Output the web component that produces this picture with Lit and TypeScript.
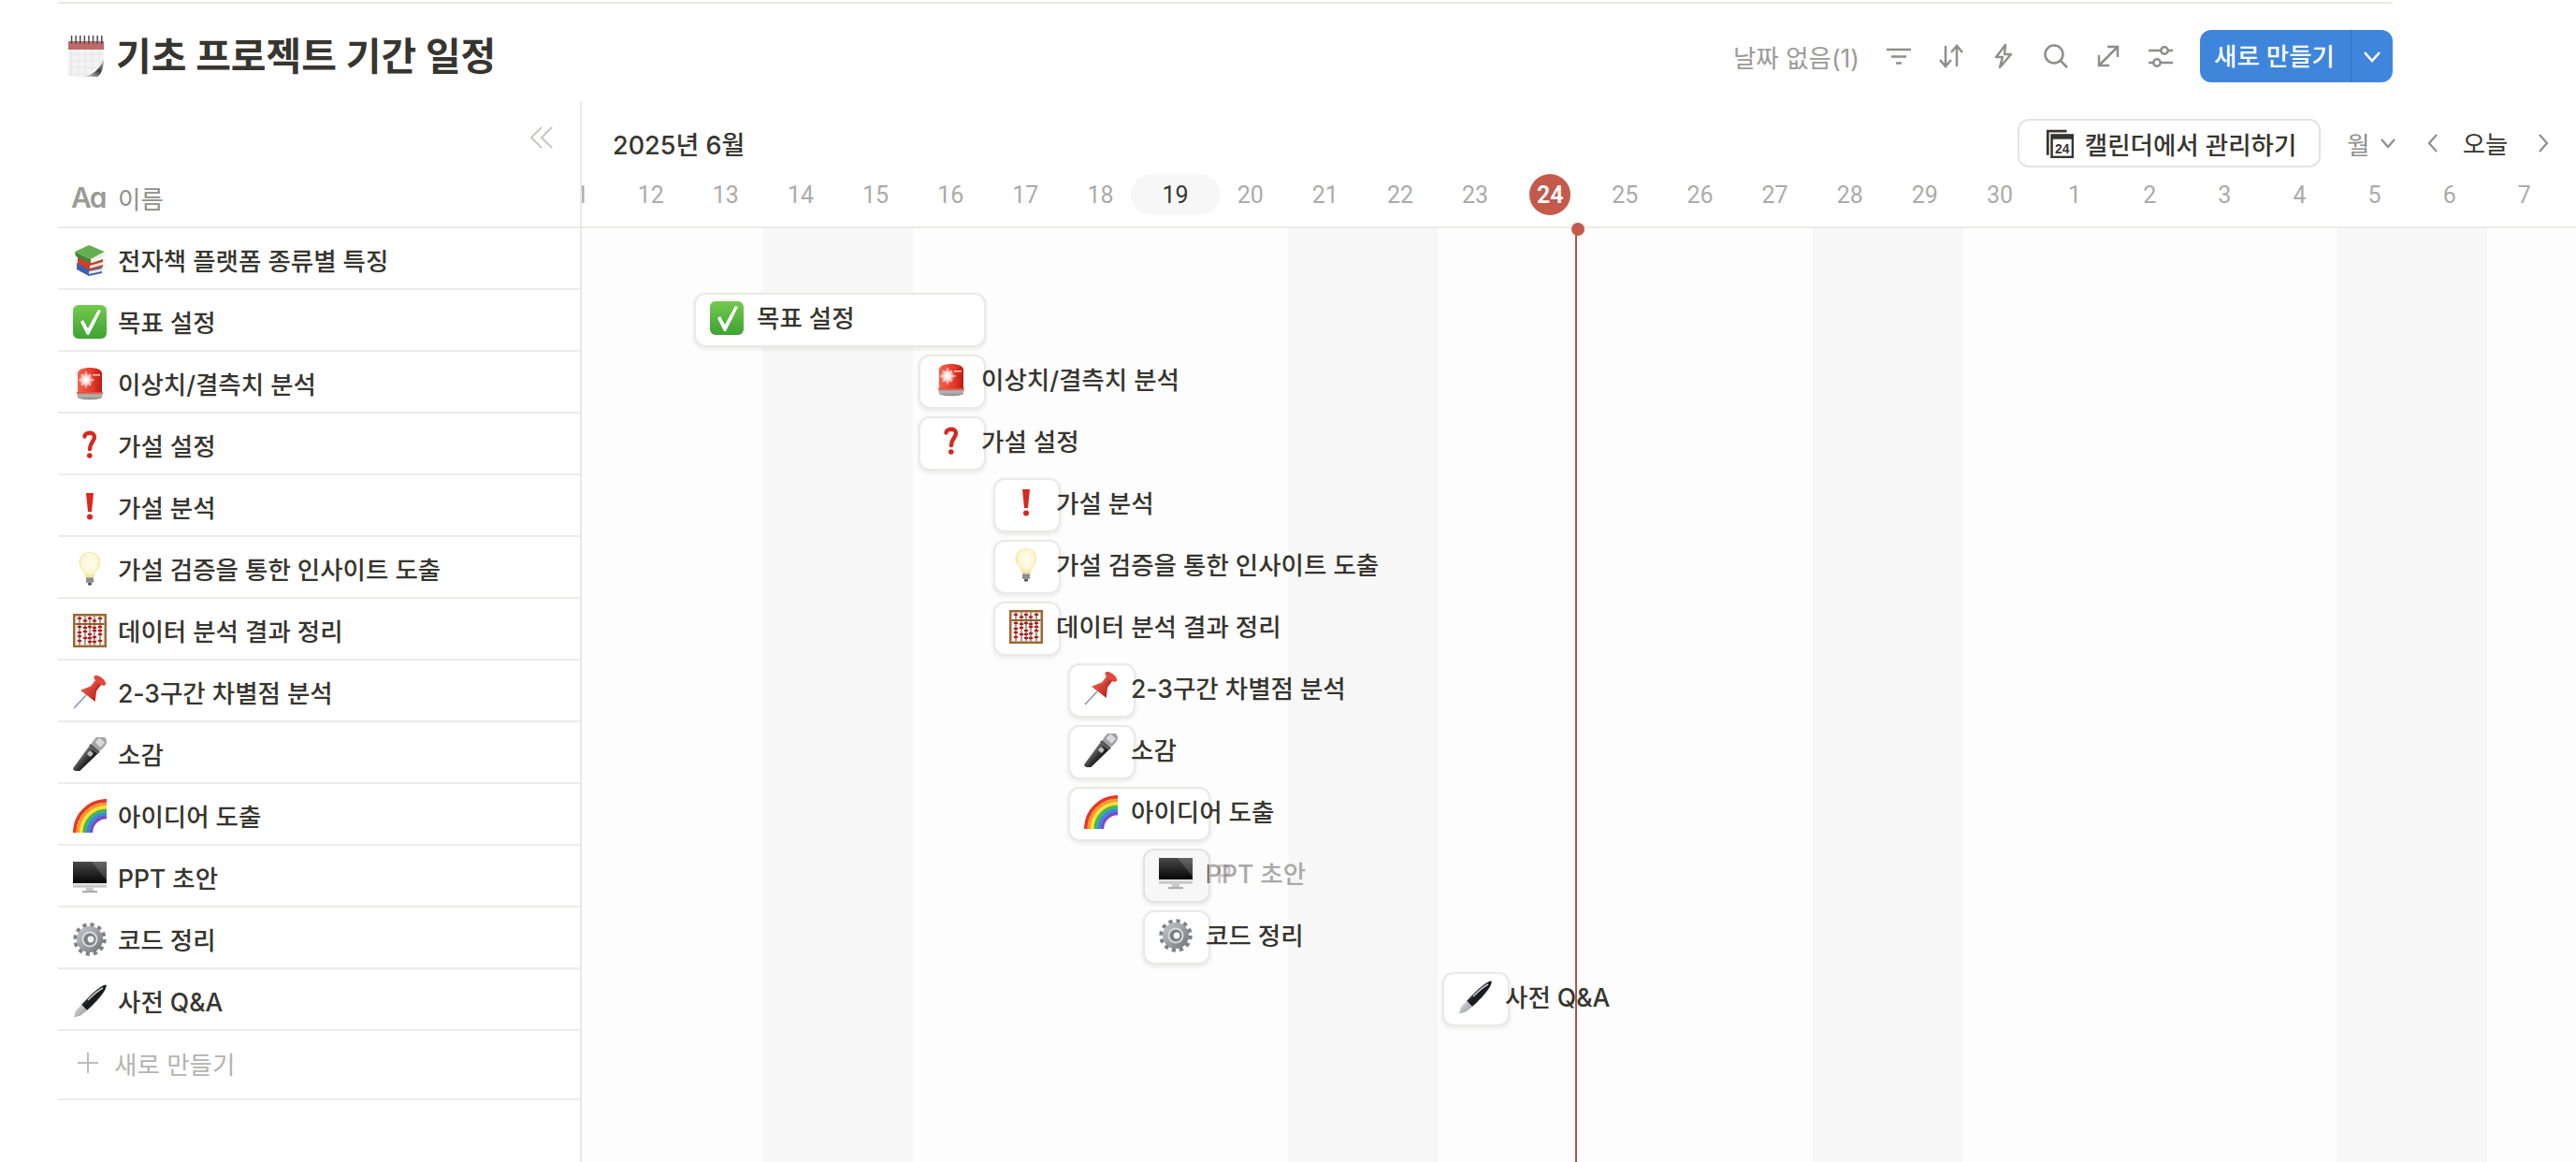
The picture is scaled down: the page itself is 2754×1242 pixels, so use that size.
import { LitElement, html, svg, css } from "lit";
import { customElement } from "lit/decorators.js";

const box = (body: unknown) => html`<svg class="emoji" viewBox="0 0 36 36">${body}</svg>`;

const seq = (n: number) => Array.from({ length: n }, (_, i) => i);

const emoji: Record<string, () => unknown> = {
  books: () => box(svg`
    <polygon points="4,21 18,28 31,25 31,32 17,35 4,28" fill="#3a5fb5"/>
    <polygon points="17,30 31,27 31,30 17,33" fill="#e8e8e2"/>
    <polygon points="5,14 20,21 32,17 32,25 18,29 5,22" fill="#c9402e"/>
    <polygon points="18,24 32,20 32,23 18,27" fill="#eee9e0"/>
    <polygon points="2,9 19,17 19,21 3,14" fill="#3d8a33"/>
    <polygon points="2,9 17,2 34,9 19,17" fill="#63ae50"/>
    <polygon points="19,17 34,9 34,13 19,21" fill="#eeeee6"/>`),
  check: () => box(svg`
    <defs><linearGradient id="gc" x1="0" y1="0" x2="0" y2="1"><stop offset="0" stop-color="#74c94f"/><stop offset="1" stop-color="#3ea233"/></linearGradient></defs>
    <rect x="0" y="0" width="36" height="36" rx="6" fill="url(#gc)"/>
    <path d="M8 18 L11 16 L16 25 L27 5 L30 6 L17 32 L15 32 Z" fill="#fff"/>`),
  siren: () => box(svg`
    <defs>
      <linearGradient id="gs" x1="0" y1="0" x2="1" y2="0"><stop offset="0" stop-color="#f8604c"/><stop offset=".6" stop-color="#e8392b"/><stop offset="1" stop-color="#b81e14"/></linearGradient>
      <linearGradient id="gs2" x1="0" y1="0" x2="0" y2="1"><stop offset="0" stop-color="#d24a3c"/><stop offset=".45" stop-color="#b9b6b2"/><stop offset="1" stop-color="#8c8a87"/></linearGradient>
      <radialGradient id="gs3" cx=".5" cy=".5" r=".5"><stop offset="0" stop-color="#fff"/><stop offset=".55" stop-color="#fff" stop-opacity=".7"/><stop offset="1" stop-color="#fff" stop-opacity="0"/></radialGradient>
    </defs>
    <path d="M5 28 V7 C5 -1 31 -1 31 7 V28 Z" fill="url(#gs)"/>
    <circle cx="14" cy="14" r="8" fill="url(#gs3)"/>
    <path d="M14 5 V23 M6 14 H23 M9 8 L19 20 M19 8 L9 20" stroke="#fff" stroke-width="1.1" opacity=".85"/>
    <rect x="21" y="8" width="8" height="1.6" fill="#fff" opacity=".7"/>
    <path d="M4 27 H32 L31 33 C28 36 8 36 5 33 Z" fill="url(#gs2)"/>`),
  question: () => box(svg`
    <path d="M12.5 8.5 C12.5 4 23 3 23 9 C23 14 18 15 18 22" fill="none" stroke="#d8281e" stroke-width="4.4" stroke-linecap="round"/>
    <circle cx="17.8" cy="29" r="2.8" fill="#d8281e"/>`),
  bang: () => box(svg`
    <polygon points="14,3 22,3 20,23 16,23" fill="#d8281e"/>
    <circle cx="18" cy="28.5" r="3" fill="#d8281e"/>`),
  bulb: () => box(svg`
    <defs><radialGradient id="gb" cx=".5" cy=".42" r=".6"><stop offset="0" stop-color="#fffef6"/><stop offset=".65" stop-color="#fdf6d0"/><stop offset="1" stop-color="#f3dc8c"/></radialGradient></defs>
    <path d="M18 0.5 C10 0.5 7 6 7 11.5 C7 17.5 13 20 14 27 H22 C23 20 29 17.5 29 11.5 C29 6 26 0.5 18 0.5Z" fill="url(#gb)" stroke="#ecdca0" stroke-width=".6"/>
    <rect x="14" y="27" width="8" height="6" rx="1" fill="#a9a8a3"/>
    <rect x="14" y="28.6" width="8" height="1" fill="#70706c"/>
    <rect x="14" y="30.8" width="8" height="1" fill="#70706c"/>
    <rect x="16" y="33" width="4" height="2.5" rx="1" fill="#4a4a48"/>`),
  abacus: () => box(svg`
    <rect width="36" height="36" fill="#9a6b35"/>
    <rect x="2.5" y="2.5" width="31" height="31" fill="#f8f6f2"/>
    ${[7, 13, 18, 23, 29].map(x => svg`<rect x="${x - 0.5}" y="2.5" width="1" height="31" fill="#5c4630"/>`)}
    <rect x="2.5" y="10" width="31" height="2" fill="#8a5f2e"/>
    ${[[7, 5], [13, 7.5], [18, 5], [23, 7.5], [29, 5], [7, 14], [7, 20], [7, 24], [7, 29], [13, 15], [13, 19], [13, 26], [18, 14], [18, 22], [18, 26], [18, 30], [23, 15], [23, 18], [23, 25], [23, 30], [29, 14], [29, 18], [29, 22], [29, 29]].map(
      ([x, y]) => svg`<ellipse cx="${x}" cy="${y}" rx="2.4" ry="1.3" fill="#b9191a"/>`)}`),
  pin: () => box(svg`
    <defs><linearGradient id="gp" x1="0" y1="0" x2="1" y2="0"><stop offset="0" stop-color="#e4564a"/><stop offset="1" stop-color="#b8261c"/></linearGradient></defs>
    <line x1="1" y1="35" x2="14" y2="21" stroke="#6f8fae" stroke-width="1.2"/>
    <g transform="rotate(38 22 14)">
      <polygon points="12,24 32,24 26,14 18,14" fill="url(#gp)"/>
      <rect x="18" y="4" width="8" height="11" fill="url(#gp)"/>
      <ellipse cx="22" cy="3" rx="7.5" ry="3.5" fill="#e2473a"/>
    </g>`),
  mic: () => box(svg`
    <defs><linearGradient id="gm" x1="0" y1="0" x2="1" y2="0"><stop offset="0" stop-color="#6f6f6f"/><stop offset=".5" stop-color="#3a3a3a"/><stop offset="1" stop-color="#141414"/></linearGradient></defs>
    <g transform="rotate(41 18 18)">
      <polygon points="12,12 24,12 21.5,42 14.5,42" fill="url(#gm)"/>
      <rect x="15.5" y="15" width="5" height="5" rx="1" fill="#bdbdbd"/>
      <rect x="11.5" y="-6" width="13" height="18" rx="6.5" fill="#a2a2a4"/>
      <rect x="14" y="-2" width="8" height="7" rx="1" fill="#d9d9da"/>
      <rect x="11.5" y="9" width="13" height="3" fill="#555"/>
    </g>`),
  rainbow: () => box(svg`${["#e8352b", "#f49a24", "#f9e13d", "#49b648", "#2f8de0", "#7b4bc4"].map((c, i) => {
    const r = 34.2 - i * 3.5;
    return svg`<path d="M${36 - r} 36 A${r} ${r} 0 0 1 36 ${36 - r}" fill="none" stroke="${c}" stroke-width="3.7"/>`;
  })}`),
  monitor: () => box(svg`
    <defs>
      <linearGradient id="gd" x1="0" y1="0" x2="0" y2="1"><stop offset="0" stop-color="#4a4a4a"/><stop offset="1" stop-color="#050505"/></linearGradient>
      <linearGradient id="gd2" x1="0" y1="0" x2="0" y2="1"><stop offset="0" stop-color="#f2f2f2"/><stop offset="1" stop-color="#b4b4b4"/></linearGradient>
    </defs>
    <rect x="0" y="1" width="36" height="23" fill="url(#gd)"/>
    <polygon points="20,1 36,1 36,21" fill="#fff" opacity=".16"/>
    <rect x="0" y="24" width="36" height="4.5" fill="url(#gd2)"/>
    <rect x="14" y="28.5" width="8" height="3.5" fill="#c9c9c9"/>
    <rect x="10" y="32" width="16" height="2.2" fill="#adadad"/>`),
  gear: () => box(svg`
    <defs><linearGradient id="gg" x1="0" y1="0" x2="1" y2="1"><stop offset="0" stop-color="#c9cbd0"/><stop offset="1" stop-color="#6f7278"/></linearGradient></defs>
    <circle cx="18" cy="18" r="15.5" fill="none" stroke="#7d8086" stroke-width="4.4" stroke-dasharray="4.06 4.06"/>
    <circle cx="18" cy="18" r="14" fill="url(#gg)"/>
    <circle cx="18" cy="18" r="8.5" fill="#d9dade"/>
    <circle cx="18" cy="18" r="6.5" fill="#7b7d83"/>
    <circle cx="19" cy="18" r="3.4" fill="#f5f5f5"/>`),
  pen: () => box(svg`
    <defs>
      <linearGradient id="gn" x1="0" y1="0" x2="1" y2="1"><stop offset="0" stop-color="#8a8f98"/><stop offset=".5" stop-color="#17181b"/><stop offset="1" stop-color="#3b3d42"/></linearGradient>
      <linearGradient id="gn2" x1="0" y1="0" x2="1" y2="1"><stop offset="0" stop-color="#e4e5e8"/><stop offset="1" stop-color="#8c8f96"/></linearGradient>
    </defs>
    <path d="M35.5 0.5 C37 6 25 19 15 28 L9 22 C18 12 30 0.5 35.5 0.5Z" fill="url(#gn)"/>
    <path d="M32 4 C26 7 21 12 16 17" stroke="#c8ccd4" stroke-width="1.4" fill="none"/>
    <polygon points="15,28 9,22 3,28 1,35.5 8,33.5" fill="url(#gn2)"/>`),
};

const spiral = html`<svg class="cal" viewBox="0 0 38 44">
  <defs>
    <linearGradient id="gcurl" x1="0" y1="1" x2="1" y2="0"><stop offset="0" stop-color="#f0f0f0"/><stop offset=".55" stop-color="#3c3c3c"/><stop offset="1" stop-color="#dcdcdc"/></linearGradient>
  </defs>
  <rect x="0" y="6" width="38" height="38" fill="#f3f3f3"/>
  ${seq(5).map(i => svg`<line x1="${i * 7.6 + 3}" y1="15" x2="${i * 7.6 + 3}" y2="44" stroke="#e2e2e2" stroke-width=".8"/>`)}
  ${seq(4).map(i => svg`<line x1="0" y1="${i * 7 + 20}" x2="38" y2="${i * 7 + 20}" stroke="#e2e2e2" stroke-width=".8"/>`)}
  <rect x="0" y="6" width="38" height="9" fill="#bf6a6a"/>
  <polygon points="19,44 38,28 38,44" fill="#fff"/>
  <path d="M16 44 C26 42 33 37 38 25 C38 33 36 41 31 44 Z" fill="url(#gcurl)"/>
  ${seq(8).map(i => svg`<rect x="${i * 4.6 + 2.8}" y="0" width="1.5" height="9" fill="#4d4d52"/>`)}
</svg>`;

const rows: [string, string][] = [
  ["books", "전자책 플랫폼 종류별 특징"],
  ["check", "목표 설정"],
  ["siren", "이상치/결측치 분석"],
  ["question", "가설 설정"],
  ["bang", "가설 분석"],
  ["bulb", "가설 검증을 통한 인사이트 도출"],
  ["abacus", "데이터 분석 결과 정리"],
  ["pin", "2-3구간 차별점 분석"],
  ["mic", "소감"],
  ["rainbow", "아이디어 도출"],
  ["monitor", "PPT 초안"],
  ["gear", "코드 정리"],
  ["pen", "사전 Q&A"],
];

/* [row index, x on page, width] */
const bars: [number, number, number][] = [
  [1, 742, 312], [2, 982, 72], [3, 982, 72], [4, 1062, 72], [5, 1062, 72], [6, 1062, 72],
  [7, 1142, 72], [8, 1142, 72], [9, 1142, 152], [10, 1222, 72], [11, 1222, 72], [12, 1542, 72],
];

const days: { d: number; weekend: boolean }[] = [];
for (let i = 0; i < 29; i++) {
  const d = i < 20 ? 11 + i : i - 19;
  const m = (i - 3 + 700) % 7;
  days.push({ d, weekend: m === 0 || m === 1 });
}

const ORIGIN = 575.5;

@customElement("app-root")
export class AppRoot extends LitElement {
  static styles = css`
    :host {
      display: block;
      height: 100vh;
      overflow: hidden;
      background: #fff;
      color: #37352f;
      font-family: "Inter", "Noto Sans CJK KR", sans-serif;
      font-size: 26.5px;
    }
    .rule { height: 2px; margin: 2px 196px 0 62px; background: #e9e8e2; }
    .top {
      display: flex; align-items: center; justify-content: space-between;
      height: 96px; margin: 8px 196px 0 62px;
    }
    .title { display: flex; align-items: center; padding-left: 11px; gap: 13px; font-size: 41px; font-weight: 700; line-height: 1; color: #37352f; }
    .cal { width: 38px; height: 44px; flex: none; }
    .tools { display: flex; align-items: center; color: #8f8e8c; }
    .nodate { color: #9b9a97; margin-right: 14px; white-space: nowrap; }
    .tool { width: 56px; height: 56px; display: flex; align-items: center; justify-content: center; }
    .tool svg { width: 28px; height: 28px; fill: none; stroke: #8f8e8c; stroke-width: 2.5; }
    .new {
      display: flex; align-items: center; height: 56px; margin-left: 14px;
      background: #3f85dc; color: #fff; border-radius: 12px; font-weight: 500;
    }
    .new-label { padding: 0 17px 0 15px; white-space: nowrap; line-height: 56px; }
    .new-arrow { width: 44px; height: 56px; display: flex; align-items: center; justify-content: center; border-left: 1px solid #3572c2; }
    .new-arrow svg { width: 20px; height: 20px; fill: none; stroke: #fff; stroke-width: 2.6; }

    .main { display: flex; margin-left: 62px; height: calc(100vh - 108px); }
    .left { flex: 0 0 560px; box-sizing: border-box; border-right: 2px solid #e9e9e7; }
    .collapse { height: 78px; display: flex; align-items: center; justify-content: flex-end; padding-right: 28px; box-sizing: border-box; }
    .collapse svg { width: 26px; height: 24px; fill: none; stroke: #c7c6c3; stroke-width: 2; }
    .name-head {
      height: 58px; box-sizing: border-box; border-bottom: 2px solid #ebebea; padding-bottom: 6px;
      display: flex; align-items: center; padding-left: 14px; color: #8f8e8b;
    }
    .aa { width: 50px; font-size: 30px; font-weight: 600; letter-spacing: -1.5px; font-feature-settings: "cv11"; color: #9b9a97; }
    .row {
      height: 66px; box-sizing: border-box; border-bottom: 2px solid #ebebea; padding-top: 3px;
      display: flex; align-items: center; padding-left: 16px; gap: 12px; white-space: nowrap; font-weight: 500;
    }
    .emoji { width: 36px; height: 36px; flex: none; display: block; }
    .add {
      height: 74px; box-sizing: border-box; border-bottom: 2px solid #ebebea; padding-bottom: 4px;
      display: flex; align-items: center; padding-left: 21px; gap: 17px; color: #b4b3b0;
    }
    .add svg { width: 22px; height: 22px; stroke: #bdbcb9; stroke-width: 2; fill: none; }

    .gantt { flex: 1; min-width: 0; overflow: hidden; display: flex; flex-direction: column; }
    .month-row { height: 78px; box-sizing: border-box; padding: 12px 25px 0 33px; display: flex; align-items: center; justify-content: space-between; }
    .month { font-size: 27px; font-weight: 500; white-space: nowrap; }
    .controls { display: flex; align-items: center; }
    .manage {
      display: flex; align-items: center; gap: 12px; height: 52px; box-sizing: border-box; padding: 0 24px 0 26px;
      border: 2px solid #e3e3e2; border-radius: 12px; white-space: nowrap; background: #fff; font-weight: 500;
    }
    .manage svg { width: 32px; height: 32px; flex: none; }
    .view { display: flex; align-items: center; gap: 10px; margin-left: 28px; color: #8f8e8b; }
    .view svg, .nav svg { fill: none; stroke: #8f8e8b; stroke-width: 2.2; }
    .view svg { width: 18px; height: 18px; }
    .nav { width: 20px; height: 28px; margin-left: 29px; }
    .nav svg { width: 20px; height: 28px; display: block; }
    .today-btn { margin-left: 22px; margin-right: 27.5px; white-space: nowrap; padding-bottom: 2px; }
    .nav.next { margin-left: 0; }

    .dates { display: flex; height: 58px; margin-left: -46.5px; border-bottom: 2px solid #ebebea; box-sizing: border-box; width: 2400px; flex: none; }
    .date { flex: 0 0 80.14px; height: 44px; display: flex; align-items: center; justify-content: center; position: relative; font-family: "Roboto", "Inter", sans-serif; font-size: 25px; color: #acaba9; }
    .date span { position: relative; }
    .date.hover { color: #37352f; }
    .date.hover::before { content: ""; position: absolute; left: -8px; right: -8px; top: 0; bottom: 0; background: #f7f7f7; border-radius: 22px; }
    .date.now { color: #fff; font-weight: 600; }
    .date.now::before { content: ""; position: absolute; left: 18px; top: 0; width: 44px; height: 44px; border-radius: 50%; background: #c4594c; }

    .body { position: relative; flex: 1; display: flex; margin-left: -46.5px; width: 2400px; background: #fdfdfd; }
    .stripe { flex: 0 0 80.14px; }
    .stripe.weekend { background: #f7f7f7; }
    .bar {
      position: absolute; height: 58px; box-sizing: border-box; border: 2px solid #e9e9e7; border-radius: 12px;
      background: #fff; box-shadow: 0 2px 5px rgba(15, 15, 15, 0.09);
      display: flex; align-items: center; padding: 0 0 4px 15px; white-space: nowrap; font-weight: 500;
    }
    .bar .label { margin-left: 14px; position: relative; flex: none; line-height: 36px; }
    .bar.drag { background: #f7f7f7; border-color: #e3e3e2; }
    .drag .label { color: #aaa9a7; }
    .ghost { position: absolute; left: 11px; top: 0; opacity: .35; color: #6f6e69; line-height: 36px; }
    .stem { position: absolute; left: 0; top: 0; width: 3px; overflow: hidden; color: #37352f; line-height: 36px; }
    .now-line { position: absolute; left: 1108.5px; top: 0; bottom: 0; width: 2px; background: #b94f45; }
    .now-dot { position: absolute; left: 1104.5px; top: -6px; width: 14px; height: 14px; border-radius: 50%; background: #c4594c; }
  `;

  render() {
    return html`
      <div class="rule"></div>
      <div class="top">
        <div class="title">${spiral}<span>기초 프로젝트 기간 일정</span></div>
        <div class="tools">
          <span class="nodate">날짜 없음(1)</span>
          <div class="tool"><svg viewBox="0 0 28 28"><path d="M1 7 H27 M6 14.5 H22 M11 21.5 H17"/></svg></div>
          <div class="tool"><svg viewBox="0 0 28 28"><path d="M8 3 V25 M2 18 L8 25 L14 18 M20 25 V3 M14 10 L20 3 L26 10"/></svg></div>
          <div class="tool"><svg viewBox="0 0 28 28" style="stroke-linejoin:round"><path d="M16 2 L6 15 H13 L10 26 L22 12 H15 Z"/></svg></div>
          <div class="tool"><svg viewBox="0 0 28 28"><circle cx="12" cy="12" r="9.5"/><path d="M19 19 L26 26"/></svg></div>
          <div class="tool"><svg viewBox="0 0 28 28"><path d="M4 24 L24 4 M13 4 H24 V15 M4 13 V24 H15"/></svg></div>
          <div class="tool"><svg viewBox="0 0 28 28"><path d="M1 8 H14 M22 8 H27 M1 21 H6 M14 21 H27"/><circle cx="18" cy="8" r="3.7"/><circle cx="10" cy="21" r="3.7"/></svg></div>
          <div class="new">
            <span class="new-label">새로 만들기</span>
            <span class="new-arrow"><svg viewBox="0 0 20 20"><path d="M2 6 L10 15 L18 6"/></svg></span>
          </div>
        </div>
      </div>
      <div class="main">
        <div class="left">
          <div class="collapse"><svg viewBox="0 0 26 24"><path d="M13 1 L2 12 L13 23 M24 1 L13 12 L24 23"/></svg></div>
          <div class="name-head"><span class="aa">Aa</span><span>이름</span></div>
          ${rows.map(([e, t]) => html`<div class="row">${emoji[e]()}<span>${t}</span></div>`)}
          <div class="add"><svg viewBox="0 0 22 22"><path d="M11 0 V22 M0 11 H22"/></svg><span>새로 만들기</span></div>
        </div>
        <div class="gantt">
          <div class="month-row">
            <span class="month">2025년 6월</span>
            <div class="controls">
              <div class="manage">
                <svg viewBox="0 0 30 30">
                  <path d="M4 27 V3 H23" fill="none" stroke="#37352f" stroke-width="2.6"/>
                  <rect x="8" y="7" width="21" height="22" fill="#fff" stroke="#37352f" stroke-width="2.4"/>
                  <rect x="8" y="7" width="21" height="4" fill="#37352f"/>
                  <text x="18.5" y="25" text-anchor="middle" font-family="Liberation Sans" font-size="13" font-weight="700" fill="#37352f">24</text>
                </svg>
                <span>캘린더에서 관리하기</span>
              </div>
              <div class="view"><span>월</span><svg viewBox="0 0 18 18"><path d="M2 5 L9 13 L16 5"/></svg></div>
              <div class="nav"><svg viewBox="0 0 20 28"><path d="M14 5 L6 14 L14 23"/></svg></div>
              <span class="today-btn">오늘</span>
              <div class="nav next"><svg viewBox="0 0 20 28"><path d="M6 5 L14 14 L6 23"/></svg></div>
            </div>
          </div>
          <div class="dates">
            ${days.map((x, i) => html`<div class="date ${i === 8 ? "hover" : ""} ${i === 13 ? "now" : ""}"><span>${x.d}</span></div>`)}
          </div>
          <div class="body">
            ${days.map(x => html`<div class="stripe ${x.weekend ? "weekend" : ""}"></div>`)}
            ${bars.map(([r, x, w]) => {
              const [e, t] = rows[r];
              const drag = e === "monitor";
              return html`<div class="bar ${drag ? "drag" : ""}" style="left:${x - ORIGIN}px;top:${313 + (r - 1) * 66 - 244}px;width:${w}px">
                ${emoji[e]()}
                <span class="label">${t}${drag
                  ? html`<span class="ghost" aria-hidden="true">P</span><span class="stem" aria-hidden="true">P</span>`
                  : ""}</span>
              </div>`;
            })}
            <div class="now-line"></div>
            <div class="now-dot"></div>
          </div>
        </div>
      </div>
    `;
  }
}
